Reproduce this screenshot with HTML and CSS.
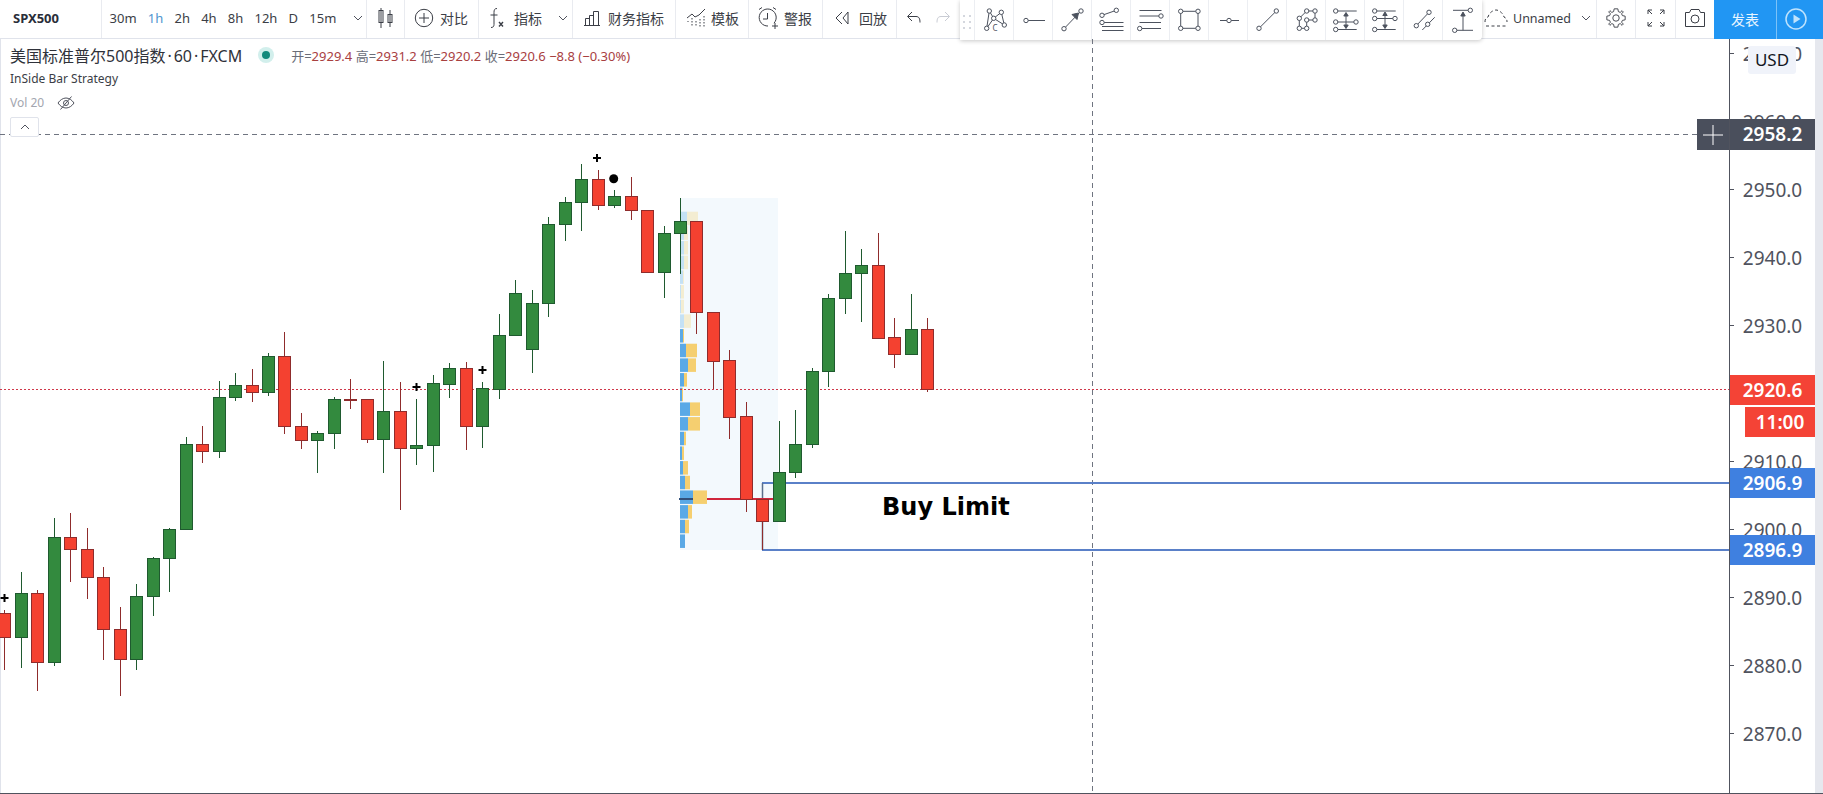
FILE: index.html
```html
<!DOCTYPE html>
<html lang="zh-CN">
<head>
    <meta charset="UTF-8">
    <title>SPX500 Chart</title>
    <link rel="stylesheet" href="styles.css">
</head>
<body>
    <header class="topbar">
        <div class="group group-symbol">SPX500</div>
        <div class="group group-intervals">
            <a>30m</a><a class="active">1h</a><a>2h</a><a>4h</a><a>8h</a><a>12h</a><a>D</a><a>15m</a>
            <svg class="chevron" viewBox="0 0 10 6"><path d="M1 1l4 4 4-4"/></svg>
        </div>
        <div class="group group-candle">
            <svg class="icon" width="20" height="22" viewBox="0 0 20 22"><path d="M5 1v20M14 3v17"/><rect x="3" y="3.500" width="4" height="12"/><rect x="12" y="7.500" width="4" height="8"/></svg>
        </div>
        <div class="group group-compare">
            <svg class="icon" width="20" height="20" viewBox="0 0 20 20"><circle cx="10" cy="10" r="8.700"/><path d="M10 5v10M5 10h10"/></svg>
            <span>对比</span>
        </div>
        <div class="group group-indicators">
            <svg class="icon" width="18" height="24" viewBox="0 0 18 24"><path d="M9 2.500c-2.500 0-3 1.500-3 4v12c0 2-1 3-3 3M2.500 9h7"/><path class="fx" d="M11 16l4 4.500M15 16l-4 4.500"/></svg>
            <span class="indicators-label">指标</span>
            <svg class="chevron" viewBox="0 0 10 6"><path d="M1 1l4 4 4-4"/></svg>
        </div>
        <div class="group group-finance">
            <svg class="icon" width="18" height="18" viewBox="0 0 18 18"><path d="M1 16.500h16M2.500 16.500v-7h4v7M6.500 16.500v-10h4v10M10.500 16.500V2.500h5v14"/></svg>
            <span>财务指标</span>
        </div>
        <div class="group group-template">
            <svg class="icon" width="20" height="20" viewBox="0 0 20 20"><path d="M1 10l5-4 3 3 4-2 6-6"/><path stroke-dasharray="1.500 1.500" d="M2 13v1M6 10v9M10 13v6M14 11v8M18 8v11"/></svg>
            <span>模板</span>
        </div>
        <div class="group group-alert">
            <svg class="icon" width="22" height="24" viewBox="0 0 22 24"><path d="M11 20a8.500 8.500 0 1 1 6-2.800M10.500 7v6H6M2 3.500l3-2M16 1.500l3 2M15 20h6M18 17v6"/></svg>
            <span>警报</span>
        </div>
        <div class="group group-replay">
            <svg class="icon" width="16" height="14" viewBox="0 0 16 14"><path d="M8 1L2 7l6 6M14 1L9 7l5 6V1z"/></svg>
            <span>回放</span>
        </div>
        <div class="group group-undo">
            <svg class="icon" width="16" height="14" viewBox="0 0 16 14"><path d="M6 1L1.500 5.500 6 10M2 5.500h8c3 0 4 2 4 6"/></svg>
            <svg class="icon icon-off" width="16" height="14" viewBox="0 0 16 14"><path d="M10 1l4.500 4.500L10 10M14 5.500H6c-3 0-4 2-4 6"/></svg>
        </div>
        <div class="spacer"></div>
        <div class="group group-layout">
            <svg class="icon" width="26" height="20" viewBox="0 0 26 20"><path stroke-dasharray="3 2.500" d="M3 18h20M2 14c0-3 1-4 3-5 1-4 5-7 8-7s7 3 8 7c2 1 3 2 3 5"/></svg>
            <span class="layout-name">Unnamed</span>
            <svg class="chevron" viewBox="0 0 10 6"><path d="M1 1l4 4 4-4"/></svg>
        </div>
        <div class="group group-gear">
            <svg class="icon" width="22" height="22" viewBox="0 0 24 24"><path d="M10 2h4l.6 3 2 .9L18.600 4 20 5.400l-1.900 2 .9 2 3 .6v4l-3 .6-.9 2 1.900 2-1.400 1.400-2-1.900-2 .9-.6 3h-4l-.6-3-2-.9-2 1.900L4 18.600l1.900-2-.9-2-3-.6v-4l3-.6.9-2-1.900-2L5.400 4l2 1.900 2-.9z"/><circle cx="12" cy="12" r="3.500"/></svg>
        </div>
        <div class="group group-full">
            <svg class="icon" width="18" height="18" viewBox="0 0 18 18"><path d="M1 5V1h4M1 1l4 4M13 1h4v4M17 1l-4 4M1 13v4h4M1 17l4-4M13 17h4v-4M17 17l-4-4"/></svg>
        </div>
        <div class="group group-camera">
            <svg class="icon" width="22" height="20" viewBox="0 0 22 20"><path d="M1.500 4.500h4l1.500-3h8l1.500 3h4v14h-19z"/><circle cx="11" cy="11" r="4"/></svg>
        </div>
        <div class="publish">发表</div>
        <div class="play">
            <svg width="24" height="24" viewBox="0 0 24 24"><circle cx="12" cy="12" r="10"/><path d="M9.500 7.500l7 4.500-7 4.500z"/></svg>
        </div>
    </header>

    <!-- drawing tools, floats over the top bar -->
    <div class="tools">
        <div class="grip"></div>
        <div class="tool"><svg viewBox="0 0 39 39"><path d="M14.300 11l-2.600 17.300M14.300 11l4.400 7.300 10.600 6.700M26.300 12.300l-7.600 6-7 10M26.300 12.300l3 12.700"/><circle cx="14.300" cy="11" r="2.200"/><circle cx="26.300" cy="12.300" r="2.200"/><circle cx="18.700" cy="18.300" r="2.200"/><circle cx="29.300" cy="25" r="2.200"/><circle cx="11.700" cy="28.300" r="2.200"/><text x="17.500" y="30.500">C</text></svg></div>
        <div class="tool"><svg viewBox="0 0 39 39"><path d="M12 20.500h19"/><circle cx="12" cy="20.500" r="2.200"/></svg></div>
        <div class="tool"><svg viewBox="0 0 39 39"><path d="M11 28.700l17-17.700"/><path class="solid" d="M25.500 13l-1.500 6.500-5-5z"/><circle cx="11" cy="28.700" r="2.200"/><circle cx="28" cy="11" r="2.200"/></svg></div>
        <div class="tool"><svg viewBox="0 0 39 39"><path d="M10 15.300l14.300-5M12 22.500h19.500M10 26.500h21.500M10 30.500h21.500"/><circle cx="10" cy="15.300" r="2.200"/><circle cx="24.300" cy="10.300" r="2.200"/><circle cx="10" cy="22.500" r="2.200"/></svg></div>
        <div class="tool"><svg viewBox="0 0 39 39"><path d="M8.500 10.500h22M8.500 16h21.500M8.500 22.500h21.500M8.700 28.500h21.300"/><circle cx="30" cy="16" r="2.200"/><circle cx="8.700" cy="28.500" r="2.200"/></svg></div>
        <div class="tool"><svg viewBox="0 0 39 39"><path d="M10.700 11.300H28v17H10.700z"/><circle cx="10.700" cy="11.300" r="2.200"/><circle cx="28" cy="11.300" r="2.200"/><circle cx="10.700" cy="28.300" r="2.200"/><circle cx="28" cy="28.300" r="2.200"/></svg></div>
        <div class="tool"><svg viewBox="0 0 39 39"><path d="M11 20.500h19"/><circle cx="20" cy="20.500" r="2.200"/></svg></div>
        <div class="tool"><svg viewBox="0 0 39 39"><path d="M11 28.300L28.300 11"/><circle cx="11" cy="28.300" r="2.200"/><circle cx="28.300" cy="11" r="2.200"/></svg></div>
        <div class="tool"><svg viewBox="0 0 39 39"><path d="M12.300 18.300l7.400-7.300H28v9h-8.300v8.300h-7.400z"/><circle cx="12.300" cy="18.300" r="2.200"/><circle cx="19.700" cy="11" r="2.200"/><circle cx="28" cy="11" r="2.200"/><circle cx="28" cy="20" r="2.200"/><circle cx="19.700" cy="20" r="2.200"/><circle cx="12.300" cy="28.300" r="2.200"/><circle cx="19.700" cy="28.300" r="2.200"/></svg></div>
        <div class="tool"><svg viewBox="0 0 39 39"><path d="M9.700 11h21M9.700 22H30M9.700 29.500h21M20 13.500v14"/><path class="solid" d="M17.800 16l2.200-3.500 2.200 3.500zM17.800 25l2.200 3.500 2.200-3.500z"/><circle cx="9.700" cy="11" r="2.200"/><circle cx="9.700" cy="22" r="2.200"/><circle cx="30" cy="22" r="2.200"/><circle cx="9.700" cy="29.500" r="2.200"/></svg></div>
        <div class="tool"><svg viewBox="0 0 39 39"><path d="M9.700 11h21M9.700 18.500H30M9.700 29.500h21M20 13v15"/><path class="solid" d="M17.800 15.500l2.200-3.500 2.200 3.500zM17.800 25l2.200 3.500 2.200-3.500z"/><circle cx="9.700" cy="11" r="2.200"/><circle cx="9.700" cy="18.500" r="2.200"/><circle cx="30" cy="18.500" r="2.200"/><circle cx="9.700" cy="29.500" r="2.200"/></svg></div>
        <div class="tool"><svg viewBox="0 0 39 39"><path d="M12.300 25.700L25 12.300M18.300 30l12.400-12.700"/><circle cx="12.300" cy="25.700" r="2.200"/><circle cx="25" cy="12.300" r="2.200"/><circle cx="23.700" cy="24.300" r="2.200"/></svg></div>
        <div class="tool"><svg viewBox="0 0 39 39"><path d="M10 10.300h17.300M11.700 30.300H30M20 30.300V13"/><path class="solid" d="M17.800 16l2.200-4 2.200 4z"/><circle cx="27.300" cy="10.300" r="2.200"/><circle cx="11.700" cy="30.300" r="2.200"/></svg></div>
    </div>

    <main class="workspace">
        <section class="pane">
            <svg id="chart" class="chart" viewBox="0 39 1729 755"></svg>
            <div class="legend">
                <div class="legend-title">
                    <span class="legend-name">美国标准普尔500指数 · 60 · FXCM</span>
                    <span class="status-dot"></span>
                    <span class="ohlc">开=<b>2929.4</b> 高=<b>2931.2</b> 低=<b>2920.2</b> 收=<b>2920.6</b> <b>−8.8 (−0.30%)</b></span>
                </div>
                <div class="legend-study">InSide Bar Strategy</div>
                <div class="legend-vol">
                    <span>Vol 20</span>
                    <svg class="icon" width="18" height="16" viewBox="0 0 18 16"><path d="M1 8c2-3 5-5 8-5s6 2 8 5c-2 3-5 5-8 5S3 11 1 8zM3.500 14.500l11-13"/><circle cx="9" cy="8" r="2.500"/></svg>
                </div>
                <button class="collapse"><svg class="chevron-up" viewBox="0 0 10 6"><path d="M1 5l4-4 4 4"/></svg></button>
            </div>
            <div class="cross-plus"><svg width="24" height="24" viewBox="0 0 24 24"><path d="M12 2v20M2 12h20"/></svg></div>
        </section>
        <aside class="axis" id="axis">
            <div class="currency">USD</div>
        </aside>
        <div class="edge"></div>
    </main>

    <script src="chart.js"></script>
</body>
</html>
```

FILE: styles.css
```css
* {
    box-sizing: border-box;
}
body {
    display: flex;
    flex-direction: column;
    height: 100vh;
    margin: 0;
    overflow: hidden;
    font-family: "Noto Sans", "Noto Sans CJK SC", sans-serif;
    font-size: 14px;
    color: #3b3e46;
    background: #fff;
}

/* top bar */
.topbar {
    display: flex;
    flex: none;
    height: 39px;
    border-bottom: 1px solid #e0e3eb;
}
.group {
    display: flex;
    flex: none;
    align-items: center;
    height: 38px;
    padding-bottom: 2px;
    border-right: 1px solid #e9ebf0;
}
.spacer {
    flex: 1;
}
.group-symbol {
    width: 102px;
    padding-left: 13px;
    font-size: 13px;
    font-weight: 700;
    color: #2a2e39;
}
.group-intervals {
    width: 265px;
    padding-left: 2px;
    font-size: 13px;
}
.group-intervals a {
    padding: 0 5.600px;
}
.group-intervals a.active {
    color: #4f95cf;
}
.group-intervals .chevron {
    margin-left: 11px;
}
.group-candle {
    width: 38px;
    justify-content: center;
}
.group-compare {
    width: 74px;
    padding-left: 9px;
    gap: 6px;
}
.group-indicators {
    width: 94px;
    padding-left: 9px;
}
.indicators-label {
    margin-left: 8px;
}
.group-indicators .chevron {
    margin-left: 16px;
}
.group-finance {
    width: 103px;
    padding-left: 10px;
    gap: 7px;
}
.group-template {
    width: 73px;
    padding-left: 10px;
    gap: 5px;
}
.group-alert {
    width: 74px;
    padding-left: 8px;
    gap: 5px;
}
.group-replay {
    width: 74px;
    padding-left: 11px;
    gap: 9px;
}
.group-undo {
    width: 63px;
    padding-left: 9px;
    gap: 13px;
    border-right: 0;
}
.group-layout {
    width: 120px;
    padding-left: 6px;
    gap: 4px;
}
.layout-name {
    font-size: 12.500px;
}
.group-layout .chevron {
    margin-left: 6px;
}
.group-gear {
    width: 39px;
    justify-content: center;
}
.group-full {
    width: 40px;
    justify-content: center;
}
.group-camera {
    width: 38px;
    justify-content: center;
    border-right: 0;
}
.publish {
    display: flex;
    flex: none;
    align-items: center;
    justify-content: center;
    width: 62px;
    height: 39px;
    padding-bottom: 2px;
    color: #e8f5ff;
    background: #2196f3;
}
.play {
    display: flex;
    flex: none;
    align-items: center;
    justify-content: center;
    width: 47px;
    height: 39px;
    padding: 0 8px 2px 0;
    background: #2196f3;
    border-left: 1px solid #7cc2f8;
}
.play circle {
    fill: none;
    stroke: #bfe3fd;
    stroke-width: 1.5;
}
.play path {
    fill: #bfe3fd;
}
.icon {
    flex: none;
    fill: none;
    stroke: #3b3e46;
    stroke-width: 1;
}
.icon .fx {
    stroke-width: 1.4;
}
.icon-off {
    stroke: #c9ccd4;
}
.chevron, .chevron-up {
    flex: none;
    width: 10px;
    height: 6px;
    fill: none;
    stroke: #50535e;
    stroke-width: 1;
}

/* floating drawing toolbar */
.tools {
    position: absolute;
    top: 0;
    left: 960px;
    display: flex;
    height: 40px;
    background: #fff;
    border-bottom-right-radius: 4px;
    box-shadow: 0 1px 4px rgba(0, 0, 0, 0.22);
}
.grip {
    width: 15px;
    margin: 0;
    border-right: 1px solid #eceef2;
    background-image: radial-gradient(#d4d7de 1.2px, transparent 1.4px);
    background-size: 6px 6px;
    background-position: 1px 1px;
    background-repeat: repeat;
    background-clip: content-box;
    padding: 11px 1px;
}
.tool {
    width: 39px;
    height: 40px;
    border-right: 1px solid #eceef2;
}
.tool:last-child {
    border-right: 0;
}
.tool svg {
    display: block;
    width: 39px;
    height: 39px;
    fill: none;
    stroke: #4c525e;
    stroke-width: 1;
}
.tool circle {
    fill: #fff;
}
.tool .solid {
    fill: #4c525e;
}
.tool text {
    font-size: 8px;
    fill: #4c525e;
    stroke: none;
}

/* chart */
.workspace {
    display: flex;
    flex: 1;
    min-height: 0;
    border-bottom: 1px solid #50535e;
}
.pane {
    position: relative;
    flex: 1;
    border-left: 1px solid #e0e3eb;
}
.chart {
    position: absolute;
    top: 0;
    left: -1px;
    width: 1729px;
    height: 755px;
}
.chart text {
    font-family: "DejaVu Sans", sans-serif;
    font-size: 24px;
    font-weight: 700;
    fill: #000;
}
.legend {
    position: absolute;
    top: 3px;
    left: 9px;
    display: flex;
    flex-direction: column;
    align-items: flex-start;
}
.legend-title {
    display: flex;
    align-items: center;
    height: 26px;
}
.legend-name {
    font-size: 16px;
    word-spacing: -2.200px;
    color: #2f323a;
}
.status-dot {
    width: 8px;
    height: 8px;
    margin: 0 21px 0 20px;
    border-radius: 50%;
    background: #138a7c;
    box-shadow: 0 0 0 4px #d2efec;
}
.ohlc {
    font-size: 13px;
    color: #6a6d78;
}
.ohlc b {
    font-weight: 400;
    color: #a8403f;
}
.legend-study {
    height: 22px;
    font-size: 12px;
    line-height: 22px;
    color: #3b3e46;
}
.legend-vol {
    display: flex;
    align-items: center;
    gap: 13px;
    height: 25px;
    font-size: 12px;
    color: #a3a6af;
}
.legend-vol .icon {
    stroke: #50535e;
}
.collapse {
    display: flex;
    align-items: center;
    justify-content: center;
    width: 29px;
    height: 20px;
    margin: 2px 0 0;
    padding: 0;
    background: #fff;
    border: 1px solid #e0e3eb;
    border-radius: 2px;
}
.cross-plus {
    position: absolute;
    top: 80px;
    right: 0;
    display: flex;
    align-items: center;
    justify-content: center;
    width: 32px;
    height: 31px;
    background: #4a4f5c;
}
.cross-plus svg {
    stroke: #fff;
    stroke-width: 1;
}

/* price axis */
.axis {
    position: relative;
    flex: none;
    width: 86px;
    border-left: 1px solid #50535e;
}
.edge {
    flex: none;
    width: 8px;
    background: #e6e8ee;
}
.tick {
    position: absolute;
    left: 0;
    width: 4px;
    height: 1px;
    background: #50535e;
}
.tick-label {
    position: absolute;
    left: 0;
    width: 85px;
    height: 26px;
    font-size: 19px;
    line-height: 26px;
    text-align: center;
    color: #50535e;
}
.price-tag {
    position: absolute;
    left: 0;
    width: 85px;
    height: 30px;
    font-size: 19px;
    font-weight: 600;
    line-height: 30px;
    text-align: center;
    color: #fff;
}
.tag-red {
    background: #f44336;
}
.tag-blue {
    background: #3f80e0;
}
.tag-cross {
    height: 31px;
    background: #4a4f5c;
}
.tag-timer {
    left: 15px;
    width: 70px;
}
.currency {
    position: absolute;
    top: 7px;
    left: 18px;
    z-index: 1;
    width: 48px;
    height: 28px;
    font-size: 17px;
    line-height: 28px;
    text-align: center;
    color: #131722;
    background: #f0f3fa;
    border-radius: 3px;
}
```

FILE: chart.js
```js
// pixel values are page coordinates, read off the 60m SPX500 chart
const GREEN = 'g', RED = 'r';
// [colour, wick top, body top, body bottom, wick bottom]
const candles = [
    [RED, 610, 613, 637, 670], [GREEN, 572, 593, 637, 668], [RED, 590, 593, 662, 691],
    [GREEN, 518, 537, 662, 666], [RED, 513, 537, 549, 582], [RED, 528, 549, 577, 599],
    [RED, 567, 577, 629, 660], [RED, 607, 629, 659, 696], [GREEN, 584, 596, 659, 670],
    [GREEN, 557, 558, 596, 616], [GREEN, 528, 529, 558, 592], [GREEN, 437, 444, 529, 529],
    [RED, 426, 444, 451, 463], [GREEN, 381, 397, 451, 458], [GREEN, 373, 385, 397, 401],
    [RED, 369, 385, 392, 402], [GREEN, 353, 356, 392, 396], [RED, 332, 356, 426, 434],
    [RED, 413, 426, 440, 449], [GREEN, 431, 433, 440, 473], [GREEN, 397, 399, 433, 449],
    [RED, 379, 399, 399, 409], [RED, 399, 399, 439, 443], [GREEN, 361, 411, 439, 473],
    [RED, 382, 411, 448, 510], [GREEN, 399, 445, 448, 465], [GREEN, 375, 383, 445, 472],
    [GREEN, 363, 368, 384, 398], [RED, 362, 368, 426, 450], [GREEN, 382, 388, 426, 448],
    [GREEN, 314, 335, 389, 399], [GREEN, 280, 293, 335, 335], [GREEN, 290, 303, 349, 373],
    [GREEN, 217, 224, 303, 317], [GREEN, 197, 202, 224, 241], [GREEN, 164, 179, 202, 231],
    [RED, 170, 179, 205, 210], [GREEN, 190, 196, 205, 208], [RED, 177, 196, 210, 220],
    [RED, 210, 210, 272, 273], [GREEN, 226, 233, 272, 298], [GREEN, 198, 221, 233, 274],
    [RED, 221, 221, 312, 334], [RED, 312, 312, 361, 389], [RED, 350, 360, 417, 439],
    [RED, 402, 416, 499, 512], [RED, 499, 499, 521, 550], [GREEN, 421, 472, 521, 522],
    [GREEN, 410, 444, 472, 478], [GREEN, 368, 371, 444, 448], [GREEN, 294, 298, 371, 387],
    [GREEN, 231, 273, 298, 314], [GREEN, 249, 265, 273, 322], [RED, 233, 265, 338, 338],
    [RED, 318, 337, 354, 368], [GREEN, 294, 329, 354, 354], [RED, 318, 329, 389, 392]
];

// volume profile rows, [blue width, blue + yellow width, faded]
const profile = [
    [7, 18, 1], [4, 8, 1], [4, 8, 1], [4, 8, 1], [3, 4, 1], [1, 4, 1], [1, 4, 1], [4, 11, 1],
    [3, 4, 0], [6, 17, 0], [8, 16, 0], [4, 7, 0], [2, 3, 0], [10, 20, 0], [8, 20, 0], [4, 6, 0],
    [2, 4, 0], [3, 8, 0], [5, 10, 0], [13, 27, 0], [8, 12, 0], [5, 9, 0], [5, 5, 0]
];

function priceY(price) {
    return 461 + (2910 - price) * 6.8;
}

const svgParts = [];
function rect(x, y, w, h, fill, extra) {
    svgParts.push(`<rect x="${x}" y="${y}" width="${w}" height="${h}" fill="${fill}" ${extra || ''}/>`);
}
function line(x1, y1, x2, y2, stroke, extra) {
    svgParts.push(`<line x1="${x1}" y1="${y1}" x2="${x2}" y2="${y2}" stroke="${stroke}" ${extra || ''}/>`);
}

// volume profile background
rect(680, 198, 98, 352, '#f3f9fd');
profile.forEach(function(row, i) {
    const y = 211.7 + i * 14.67;
    const extra = row[2] ? 'opacity="0.3"' : '';
    rect(680, y, row[0], 13.5, '#5aa9e6', extra);
    rect(680 + row[0], y, row[1] - row[0], 13.5, '#f5cf70', extra);
});

// last price and crosshair
line(0, 389.5, 1729, 389.5, '#d0384a', 'stroke-dasharray="2 2"');
line(0, 134.5, 1697, 134.5, '#6f7480', 'stroke-dasharray="5 4"');
line(1092.5, 39, 1092.5, 794, '#6f7480', 'stroke-dasharray="5 4"');

// buy limit box
line(762, 483, 1729, 483, '#5a80c8', 'stroke-width="2"');
line(762, 550, 1729, 550, '#5a80c8', 'stroke-width="2"');
line(762.5, 483, 762.5, 550, '#5a6f8c', 'stroke-width="1.5"');

// profile point of control
line(679, 499, 693, 499, '#33507a', 'stroke-width="2"');
line(707, 499, 773, 499, '#d0263c', 'stroke-width="2"');

candles.forEach(function(c, i) {
    const x = Math.round(4.3 + 16.48 * i) + 0.5;
    const body = c[0] === GREEN ? '#338a3e' : '#f44130';
    const edge = c[0] === GREEN ? '#1f5a2f' : '#8f2c2c';
    line(x, c[1], x, c[4], edge);
    rect(x - 6, c[2] + 0.5, 12, Math.max(c[3] - c[2], 1), body, `stroke="${edge}"`);
});

// strategy marks
[[4.5, 598], [416.5, 387], [482.5, 370], [597, 158]].forEach(function(m) {
    line(m[0] - 4, m[1], m[0] + 4, m[1], '#000', 'stroke-width="2"');
    line(m[0], m[1] - 4, m[0], m[1] + 4, '#000', 'stroke-width="2"');
});
svgParts.push('<circle cx="613.7" cy="178.7" r="4.5" fill="#000"/>');

svgParts.push('<text x="882" y="515">Buy Limit</text>');
document.getElementById('chart').innerHTML = svgParts.join('');

// price axis
const axis = document.getElementById('axis');
function addToAxis(cls, text, top) {
    const el = document.createElement('div');
    el.className = cls;
    el.textContent = text;
    el.style.top = top + 'px';
    axis.appendChild(el);
}
for (let p = 2970; p >= 2870; p -= 10) {
    const y = Math.round(priceY(p)) - 39;
    addToAxis('tick', '', y);
    addToAxis('tick-label', p.toFixed(1), y - 12);
}
addToAxis('price-tag tag-cross', '2958.2', 80);
addToAxis('price-tag tag-red', '2920.6', 335.500);
addToAxis('price-tag tag-red tag-timer', '11:00', 368);
addToAxis('price-tag tag-blue', '2906.9', 429);
addToAxis('price-tag tag-blue', '2896.9', 496);
```
